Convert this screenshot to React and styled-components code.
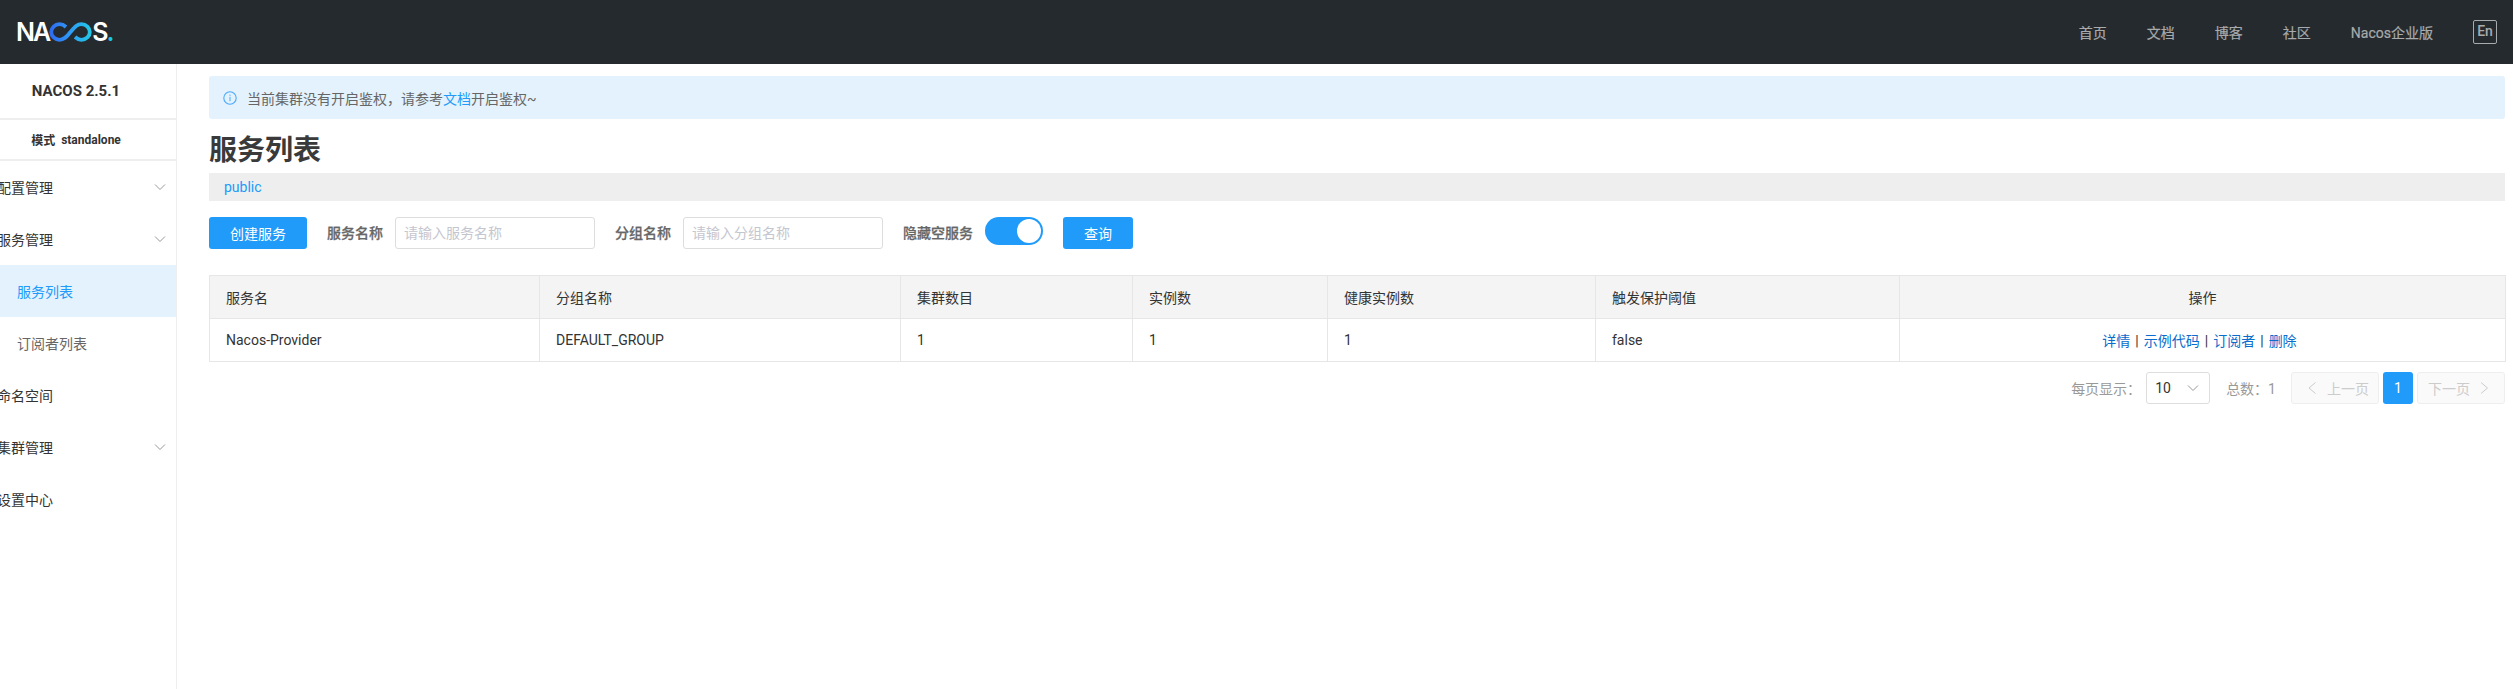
import React from "react";
import styled, { createGlobalStyle } from "styled-components";

const GlobalStyle = createGlobalStyle`
  html, body {
    margin: 0;
    padding: 0;
    background: #fff;
    font-family: Roboto, "Noto Sans CJK SC", sans-serif;
    font-size: 14px;
    color: #333;
  }
  * { box-sizing: border-box; }
`;

const Page = styled.div`
  min-height: 100vh;
  display: flex;
  flex-direction: column;
  overflow: hidden;
`;

const Header = styled.header`
  height: 64px;
  background: #252a2f;
  display: flex;
  align-items: center;
  justify-content: space-between;
  padding: 0 16px 0 16px;
`;

const Logo = styled.div`
  display: flex;
  align-items: center;
  font-family: Inter, sans-serif;
  font-weight: 600;
  font-size: 25px;
  line-height: 1;
  color: #fff;
  letter-spacing: -2px;
`;

const LogoDot = styled.span`
  color: #1cc8e0;
`;

const Nav = styled.nav`
  display: flex;
  align-items: center;
  gap: 40px;
`;

const NavLink = styled.a`
  color: #a8aaac;
  font-size: 14px;
  -webkit-text-stroke: 0.2px #a8aaac;
`;

const LangBox = styled.span`
  width: 24px;
  height: 24px;
  border: 1px solid #a8aaac;
  border-radius: 2px;
  color: #a8aaac;
  font-size: 14px;
  font-weight: 500;
  line-height: 20px;
  text-align: center;
`;

const Body = styled.div`
  flex: 1;
  display: flex;
`;

const Sidebar = styled.aside`
  width: 177px;
  flex: none;
  border-right: 1px solid #eee;
`;

const Brand = styled.div`
  height: 56px;
  padding-right: 24px;
  border-bottom: 2px solid #eee;
  display: flex;
  align-items: center;
  justify-content: center;
  font-size: 15px;
  font-weight: 700;
  color: #333;
`;

const Mode = styled.div`
  height: 41px;
  padding-right: 24px;
  border-bottom: 2px solid #eee;
  display: flex;
  align-items: center;
  justify-content: center;
  gap: 6px;
  font-size: 12px;
  font-weight: 700;
  color: #333;
`;

const MenuItem = styled.div`
  height: 52px;
  display: flex;
  align-items: center;
  justify-content: space-between;
  padding-left: ${(p) => (p.$sub ? "17px" : "0")};
  padding-right: 10px;
  background: ${(p) => (p.$active ? "#e3f2fd" : "transparent")};
  color: ${(p) => (p.$active ? "#209bfa" : p.$sub ? "#666" : "#333")};
  font-size: 14px;
`;

const MenuLabel = styled.span`
  margin-left: ${(p) => (p.$sub ? "0" : "-3px")};
`;

const Main = styled.main`
  flex: 1;
  min-width: 0;
  padding: 12px 8px 0 32px;
`;

const Alert = styled.div`
  height: 43px;
  background: #e3f2fd;
  border-radius: 3px;
  display: flex;
  align-items: center;
  gap: 10px;
  padding: 0 14px;
  color: #666;
`;

const DocLink = styled.a`
  color: #209bfa;
`;

const Title = styled.h1`
  margin: 10px 0 0;
  height: 44px;
  font-size: 28px;
  line-height: 43px;
  font-weight: 700;
  color: #3a3a3a;
`;

const NamespaceBar = styled.div`
  height: 28px;
  background: #eee;
  padding-left: 15px;
  line-height: 28px;
  color: #209bfa;
`;

const Toolbar = styled.div`
  margin-top: 16px;
  display: flex;
  align-items: flex-start;
`;

const PrimaryButton = styled.button`
  width: ${(p) => p.$width}px;
  height: 32px;
  margin-right: ${(p) => p.$after || 0}px;
  border: none;
  border-radius: 3px;
  background: #209bfa;
  color: #fff;
  font: inherit;
  padding: 0;
`;

const FieldLabel = styled.label`
  height: 32px;
  line-height: 32px;
  margin-right: 12px;
  color: #666;
  font-weight: 500;
  -webkit-text-stroke: 0.25px #666;
`;

const TextInput = styled.input`
  width: 200px;
  height: 32px;
  margin-right: 20px;
  padding: 0 8px;
  border: 1px solid #ddd;
  border-radius: 3px;
  font: inherit;
  outline: none;

  &::placeholder {
    color: #c4c6cf;
  }
`;

const Switch = styled.div`
  width: 58px;
  height: 28px;
  margin-right: 20px;
  padding: 2px;
  border-radius: 14px;
  background: #209bfa;
  display: flex;
  justify-content: flex-end;
`;

const SwitchKnob = styled.span`
  width: 24px;
  height: 24px;
  border-radius: 50%;
  background: #fff;
`;

const Table = styled.table`
  width: 100%;
  margin-top: 26px;
  table-layout: fixed;
  border-collapse: collapse;
`;

const HeadCell = styled.th`
  height: 43px;
  padding: 0 16px;
  background: #f4f4f4;
  border: 1px solid #e6e6e6;
  font-weight: 400;
  text-align: ${(p) => (p.$center ? "center" : "left")};
  color: #333;
`;

const Cell = styled.td`
  height: 43px;
  padding: 0 16px;
  border: 1px solid #e6e6e6;
  color: #333;
`;

const ActionCell = styled(Cell)`
  padding-right: 22px;
  text-align: center;
`;

const ActionLink = styled.a`
  color: #0a6ccc;
`;

const Sep = styled.span`
  margin: 0 5px;
  color: #333;
`;

const Pagination = styled.div`
  margin-top: 10px;
  display: flex;
  align-items: center;
  justify-content: flex-end;
  color: #999;
`;

const PageSize = styled.div`
  width: 64px;
  height: 32px;
  margin: 0 16px 0 5px;
  padding: 0 10px 0 8px;
  border: 1px solid #ddd;
  border-radius: 3px;
  display: flex;
  align-items: center;
  justify-content: space-between;
  color: #333;
`;

const Total = styled.span`
  margin-right: 15px;
`;

const PageNav = styled.div`
  width: 88px;
  height: 32px;
  padding-left: ${(p) => (p.$next ? "10px" : "14px")};
  border: 1px solid #eee;
  border-radius: 3px;
  background: #fafafa;
  color: #ccc;
  display: flex;
  align-items: center;
  gap: ${(p) => (p.$next ? "7px" : "9px")};
`;

const PageNumber = styled.div`
  width: 30px;
  height: 32px;
  margin: 0 4px;
  border-radius: 3px;
  background: #209bfa;
  color: #fff;
  text-align: center;
  line-height: 32px;
`;

function Chevron({ dir = "down", size = 12, color = "#999" }) {
  const points = {
    down: "1,3.5 6,8.5 11,3.5",
    left: "9.500,0.500 3,6 9.500,11.500",
    right: "4,0.500 10.500,6 4,11.500",
  }[dir];
  return (
    <svg width={size} height={size} viewBox="0 0 12 12" fill="none">
      <polyline points={points} stroke={color} strokeWidth="1" />
    </svg>
  );
}

function InfoIcon() {
  return (
    <svg width="14" height="14" viewBox="0 0 14 14" fill="none">
      <circle cx="7" cy="7" r="6.2" stroke="#4aa8fa" strokeWidth="1.1" />
      <rect x="6.5" y="3.6" width="1" height="1.2" fill="#4aa8fa" />
      <rect x="6.5" y="5.8" width="1" height="4.4" fill="#4aa8fa" />
    </svg>
  );
}

// only the joined C and O are a drawing, the rest of the logo is text
function LogoLoop() {
  return (
    <svg width="43" height="20" viewBox="0 0 43 20" fill="none">
      <defs>
        <linearGradient id="loop" x1="0" y1="0" x2="1" y2="0">
          <stop offset="0" stopColor="#2f6df0" />
          <stop offset="0.5" stopColor="#2f9cf5" />
          <stop offset="1" stopColor="#22c6e6" />
        </linearGradient>
      </defs>
      <path
        d="M17 5C15 3.200 13 2.200 10.500 2.200C5.800 2.200 2.200 5.800 2.200 10C2.200 14.200 5.800 17.800 10.500 17.800C16 17.800 18 14 21.500 10C25 6 27 2.200 32.500 2.200C37.200 2.200 40.800 5.800 40.800 10C40.800 14.200 37.200 17.800 32.500 17.800C30 17.800 28 16.800 26 15"
        stroke="url(#loop)"
        strokeWidth="3.800"
      />
    </svg>
  );
}

const navItems = ["首页", "文档", "博客", "社区", "Nacos企业版"];
const columns = [
  { title: "服务名", width: 330 },
  { title: "分组名称", width: 361 },
  { title: "集群数目", width: 232 },
  { title: "实例数", width: 195 },
  { title: "健康实例数", width: 268 },
  { title: "触发保护阈值", width: 304 },
  { title: "操作", width: 606, center: true },
];
const row = ["Nacos-Provider", "DEFAULT_GROUP", "1", "1", "1", "false"];

export default function App() {
  return (
    <Page>
      <GlobalStyle />
      <Header>
        <Logo>
          NA
          <LogoLoop />
          S<LogoDot>.</LogoDot>
        </Logo>
        <Nav>
          {navItems.map((item) => (
            <NavLink key={item}>{item}</NavLink>
          ))}
          <LangBox>En</LangBox>
        </Nav>
      </Header>
      <Body>
        <Sidebar>
          <Brand>NACOS 2.5.1</Brand>
          <Mode>
            <span>模式</span>
            <span>standalone</span>
          </Mode>
          <MenuItem>
            <MenuLabel>配置管理</MenuLabel>
            <Chevron />
          </MenuItem>
          <MenuItem>
            <MenuLabel>服务管理</MenuLabel>
            <Chevron />
          </MenuItem>
          <MenuItem $sub $active>
            <MenuLabel $sub>服务列表</MenuLabel>
          </MenuItem>
          <MenuItem $sub>
            <MenuLabel $sub>订阅者列表</MenuLabel>
          </MenuItem>
          <MenuItem>
            <MenuLabel>命名空间</MenuLabel>
          </MenuItem>
          <MenuItem>
            <MenuLabel>集群管理</MenuLabel>
            <Chevron />
          </MenuItem>
          <MenuItem>
            <MenuLabel>设置中心</MenuLabel>
          </MenuItem>
        </Sidebar>
        <Main>
          <Alert>
            <InfoIcon />
            <span>
              当前集群没有开启鉴权，请参考<DocLink>文档</DocLink>开启鉴权~
            </span>
          </Alert>
          <Title>服务列表</Title>
          <NamespaceBar>public</NamespaceBar>
          <Toolbar>
            <PrimaryButton $width={98} $after={20}>创建服务</PrimaryButton>
            <FieldLabel>服务名称</FieldLabel>
            <TextInput placeholder="请输入服务名称" />
            <FieldLabel>分组名称</FieldLabel>
            <TextInput placeholder="请输入分组名称" />
            <FieldLabel>隐藏空服务</FieldLabel>
            <Switch>
              <SwitchKnob />
            </Switch>
            <PrimaryButton $width={70}>查询</PrimaryButton>
          </Toolbar>
          <Table>
            <colgroup>
              {columns.map((c) => (
                <col key={c.title} width={c.width} />
              ))}
            </colgroup>
            <thead>
              <tr>
                {columns.map((c) => (
                  <HeadCell key={c.title} $center={c.center}>
                    {c.title}
                  </HeadCell>
                ))}
              </tr>
            </thead>
            <tbody>
              <tr>
                {row.map((v, i) => (
                  <Cell key={i}>{v}</Cell>
                ))}
                <ActionCell>
                  <ActionLink>详情</ActionLink>
                  <Sep>|</Sep>
                  <ActionLink>示例代码</ActionLink>
                  <Sep>|</Sep>
                  <ActionLink>订阅者</ActionLink>
                  <Sep>|</Sep>
                  <ActionLink>删除</ActionLink>
                </ActionCell>
              </tr>
            </tbody>
          </Table>
          <Pagination>
            <span>每页显示：</span>
            <PageSize>
              10
              <Chevron />
            </PageSize>
            <Total>总数：1</Total>
            <PageNav>
              <Chevron dir="left" color="#ccc" />
              上一页
            </PageNav>
            <PageNumber>1</PageNumber>
            <PageNav $next>
              下一页
              <Chevron dir="right" color="#ccc" />
            </PageNav>
          </Pagination>
        </Main>
      </Body>
    </Page>
  );
}
